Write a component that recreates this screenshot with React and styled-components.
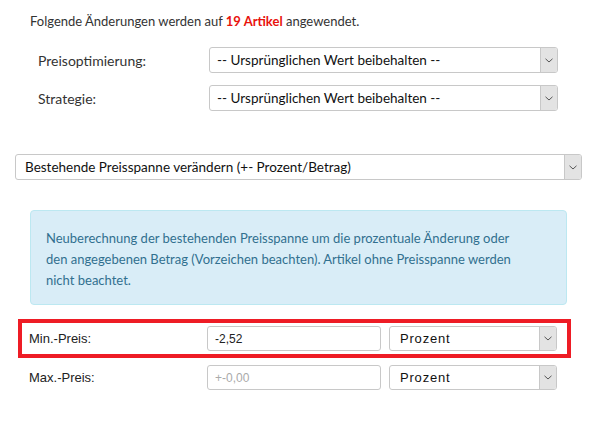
import styled, { createGlobalStyle } from "styled-components";

const GlobalStyle = createGlobalStyle`
  body {
    margin: 0;
    background: #fff;
    font-family: Lato, "Open Sans", sans-serif;
    color: #333;
  }
`;

const Page = styled.div`
  width: 566px;
  padding: 12px 0 0 15px;
`;

const Intro = styled.p`
  margin: 0 0 17px 15px;
  font-size: 13px;
  line-height: 18px;
`;

const Count = styled.strong`
  color: #e8120c;
  font-weight: 700;
`;

const FieldRow = styled.div`
  display: flex;
  align-items: center;
  padding-left: 23px;
  margin-bottom: 12px;
`;

const Label = styled.label`
  width: 171px;
  font-size: 14px;
`;

const SelectBox = styled.div`
  display: flex;
  width: ${(p) => p.$width}px;
  height: ${(p) => p.$height || 26}px;
  box-sizing: border-box;
  border: 1px solid #c8c8c8;
  border-radius: 3px;
  background: #fff;
  overflow: hidden;
`;

const SelectText = styled.div`
  flex: 1;
  display: flex;
  align-items: center;
  padding-left: ${(p) => p.$pad || 7}px;
  font-size: ${(p) => p.$size || 13.5}px;
  font-family: ${(p) => (p.$classic ? '"Liberation Sans", Arial, sans-serif' : 'Lato, "Open Sans", sans-serif')};
  letter-spacing: ${(p) => (p.$classic ? "0.8px" : "0")};
  color: #111;
`;

const Arrow = styled.div`
  width: 16px;
  display: flex;
  align-items: center;
  justify-content: center;
  background: #e3e3e3;
  border-left: 1px solid #c8c8c8;
`;

const Chevron = () => (
  <svg width="8" height="5" viewBox="0 0 8 5">
    <path d="M0.5 0.8 L4 4 L7.5 0.8" fill="none" stroke="#555" strokeWidth="1" />
  </svg>
);

const Select = ({ width, height, size, pad, classic, children }) => (
  <SelectBox $width={width} $height={height}>
    <SelectText $size={size} $pad={pad} $classic={classic}>
      {children}
    </SelectText>
    <Arrow>
      <Chevron />
    </Arrow>
  </SelectBox>
);

const ModeBlock = styled.div`
  margin-top: 43px;
`;

const Info = styled.div`
  margin: 30px 14px 0 15px;
  padding: 17px 54px 13px 15px;
  background: #d9edf7;
  border: 1px solid #bce8f1;
  border-radius: 4px;
  color: #31708f;
  font-size: 13px;
  line-height: 21px;
`;

const Highlight = styled.div`
  margin: 14px 10px 0 3px;
  border: 4px solid #ee1c25;
  padding: 3px 10px 3px 7px;
`;

const PriceRow = styled.div`
  display: flex;
  align-items: center;
  gap: 8px;
  padding-left: ${(p) => p.$pad || 0}px;
  margin-top: ${(p) => p.$top || 0}px;
`;

const PriceLabel = styled.div`
  width: 170px;
  font-family: "Liberation Sans", Arial, sans-serif;
  font-size: 13px;
  color: #222;
`;

const Input = styled.input`
  width: 174px;
  height: 25px;
  box-sizing: border-box;
  border: 1px solid #c8c8c8;
  border-radius: 3px;
  padding: 0 7px;
  font-family: "Liberation Sans", Arial, sans-serif;
  font-size: 12px;
  color: #222;
  &::placeholder {
    color: #aaa;
  }
`;

export default function App() {
  return (
    <>
      <GlobalStyle />
      <Page>
        <Intro>
          Folgende Änderungen werden auf <Count>19 Artikel</Count> angewendet.
        </Intro>
        <FieldRow>
          <Label>Preisoptimierung:</Label>
          <Select width={349}>-- Ursprünglichen Wert beibehalten --</Select>
        </FieldRow>
        <FieldRow>
          <Label>Strategie:</Label>
          <Select width={349}>-- Ursprünglichen Wert beibehalten --</Select>
        </FieldRow>
        <ModeBlock>
          <Select width={567} height={26} pad={9}>
            Bestehende Preisspanne verändern (+- Prozent/Betrag)
          </Select>
        </ModeBlock>
        <Info>
          Neuberechnung der bestehenden Preisspanne um die prozentuale Änderung oder den
          angegebenen Betrag (Vorzeichen beachten). Artikel ohne Preisspanne werden nicht
          beachtet.
        </Info>
        <Highlight>
          <PriceRow>
            <PriceLabel>Min.-Preis:</PriceLabel>
            <Input defaultValue="-2,52" />
            <Select width={168} height={25} size={13} pad={10} classic>
              Prozent
            </Select>
          </PriceRow>
        </Highlight>
        <PriceRow $pad={14} $top={7}>
          <PriceLabel>Max.-Preis:</PriceLabel>
          <Input placeholder="+-0,00" />
          <Select width={168} height={25} size={13} pad={10} classic>
            Prozent
          </Select>
        </PriceRow>
      </Page>
    </>
  );
}
